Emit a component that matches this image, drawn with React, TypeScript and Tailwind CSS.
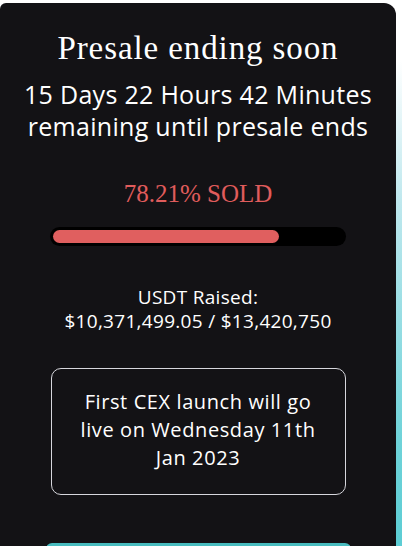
export default function App() {
  const sold = 78.21;
  return (
    <div className="relative h-[546px] w-[402px] overflow-hidden bg-[linear-gradient(to_bottom,#ffffff_0px,#ffffff_60px,#bfe8ee_200px,#6fd3d9_440px,#5ccdd4_546px)]">
      <div className="ml-0 mt-[3px] flex h-[600px] w-[396px] flex-col items-center rounded-tl-[6px] rounded-tr-[12px] bg-[#131215] text-white">
        <h1 className="mt-[24px] font-['Liberation_Serif',serif] text-[33px] leading-[42px] tracking-[0.9px]">
          Presale ending soon
        </h1>
        <p className="mt-[9px] text-center font-['Open_Sans',sans-serif] text-[25px] leading-[32px] tracking-[0.3px]">
          15 Days 22 Hours 42 Minutes
          <br />
          remaining until presale ends
        </p>
        <div className="mt-[37px] font-['Liberation_Serif',serif] text-[25px] leading-[30px] text-[#e05c5c]">
          {sold}% SOLD
        </div>
        <div className="mt-[18px] h-[19px] w-[296px] rounded-full bg-black p-[3px] pr-[4px]">
          <div
            className="h-full rounded-full bg-[#e05f5f]"
            style={{ width: `${sold}%` }}
          />
        </div>
        <div className="mt-[39px] text-center font-['Open_Sans',sans-serif] text-[19px] leading-[24px] tracking-[0.3px]">
          USDT Raised:
          <br />
          $10,371,499.05 / $13,420,750
        </div>
        <div className="mt-[35px] flex h-[127px] w-[295px] items-center justify-center rounded-[10px] border border-[#d6d6dc] text-center font-['Open_Sans',sans-serif] text-[20px] leading-[28px] tracking-[0.6px]">
          <p className="-mt-[3px]">
            First CEX launch will go
            <br />
            live on Wednesday 11th
            <br />
            Jan 2023
          </p>
        </div>
        <div className="mt-[48px] h-[20px] w-[305px] rounded-t-[6px] bg-[#48bcbf]" />
      </div>
    </div>
  );
}
